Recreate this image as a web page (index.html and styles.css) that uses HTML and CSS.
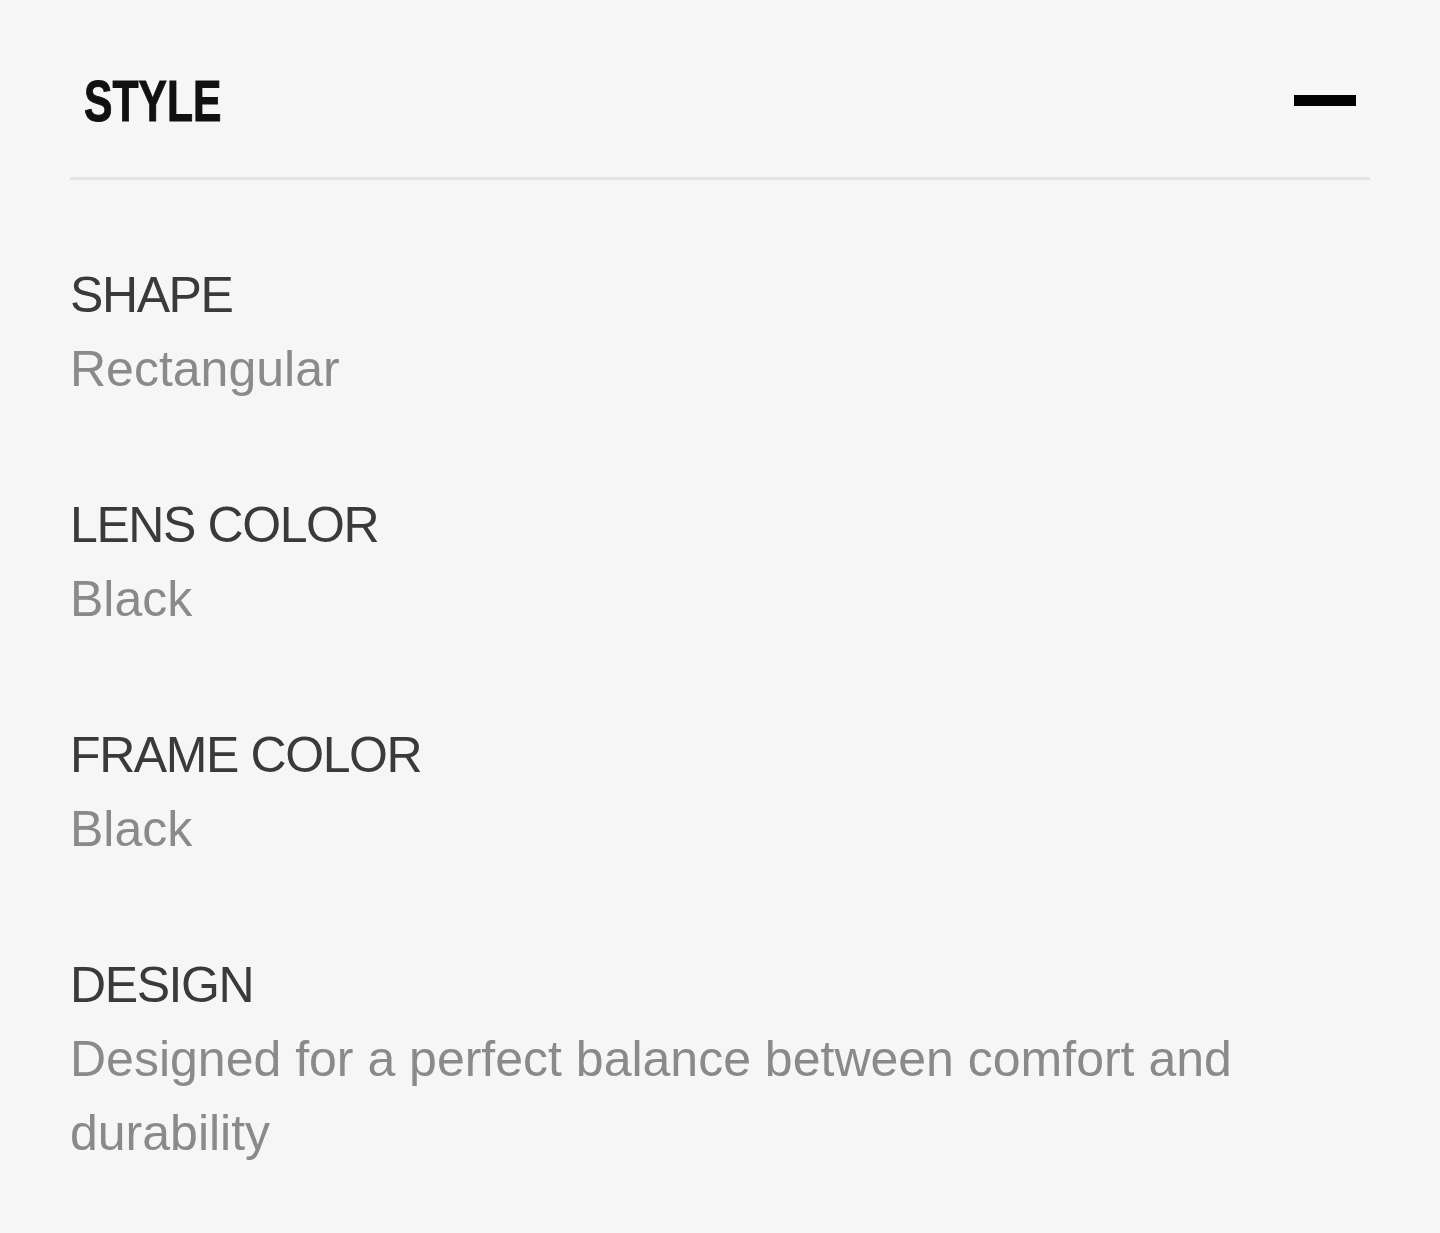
FILE: index.html
```html
<!DOCTYPE html>
<html lang="en">
<head>
<meta charset="utf-8">
<title>Style</title>
<link rel="stylesheet" href="styles.css">
</head>
<body>
<section class="panel">
  <header class="panel-head">
    <h2 class="panel-title">STYLE</h2>
    <span class="minus" aria-label="Collapse"></span>
  </header>
  <dl class="specs">
    <div class="spec">
      <dt class="spec-label">SHAPE</dt>
      <dd class="spec-value">Rectangular</dd>
    </div>
    <div class="spec">
      <dt class="spec-label">LENS COLOR</dt>
      <dd class="spec-value">Black</dd>
    </div>
    <div class="spec">
      <dt class="spec-label">FRAME COLOR</dt>
      <dd class="spec-value">Black</dd>
    </div>
    <div class="spec">
      <dt class="spec-label">DESIGN</dt>
      <dd class="spec-value">Designed for a perfect balance between comfort and durability</dd>
    </div>
  </dl>
</section>
</body>
</html>
```
FILE: styles.css
```css
html, body {
  margin: 0;
  padding: 0;
  background: #f6f6f6;
}
body {
  font-family: "Liberation Sans", Arial, sans-serif;
}
.panel {
  padding: 24px 70px 0;
}
.panel-head {
  height: 153px;
  padding: 0 14px;
  display: flex;
  align-items: center;
  justify-content: space-between;
  border-bottom: 3px solid #e3e3e3;
}
.panel-title {
  margin: 0;
  font-family: "Liberation Sans", Arial, sans-serif;
  font-weight: 700;
  font-size: 58px;
  color: #111;
  line-height: 1;
  -webkit-text-stroke: 1px #111;
  transform: scaleX(0.735);
  transform-origin: left center;
}
.minus {
  display: block;
  width: 62px;
  height: 11px;
  background: #000;
}
.specs {
  margin: 0;
  padding-top: 78px;
  display: flex;
  flex-direction: column;
  gap: 82px;
}
.spec-label {
  margin: 0;
  font-size: 50px;
  line-height: 74px;
  letter-spacing: -1.4px;
  color: #3a3a3a;
}
.spec-value {
  margin: 0;
  font-size: 50px;
  line-height: 74px;
  color: #8a8a8a;
}
```
